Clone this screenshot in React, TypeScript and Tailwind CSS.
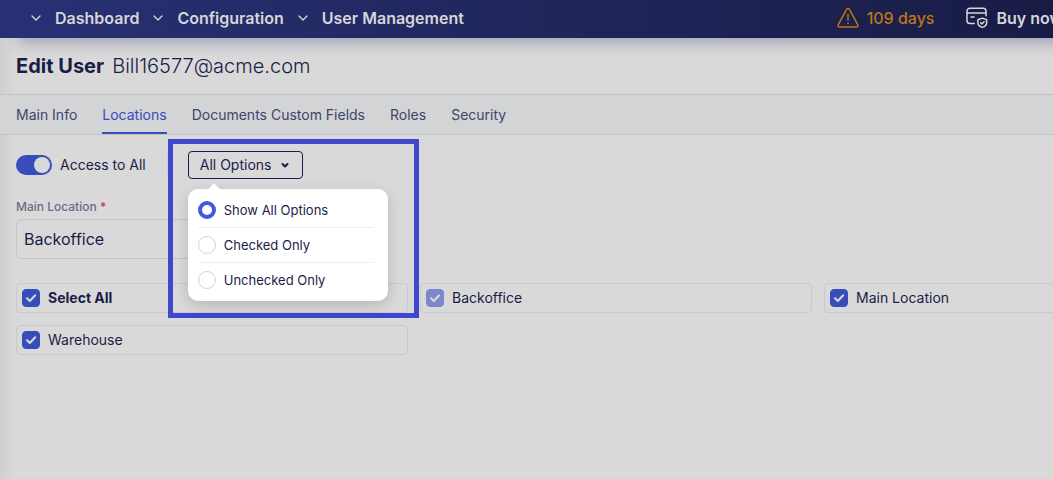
import React, { useState } from 'react';
import { ChevronDown } from 'lucide-react';
import clsx from 'clsx';

const crumbs = ['Dashboard', 'Configuration', 'User Management'];
const tabs = ['Main Info', 'Locations', 'Documents Custom Fields', 'Roles', 'Security'];
const filters = ['Show All Options', 'Checked Only', 'Unchecked Only'];

const WarningIcon = () => (
    <svg className="h-[22px] w-[22px] shrink-0" viewBox="0 0 22 22" fill="none" stroke="currentColor" strokeWidth="1.5" strokeLinecap="round" strokeLinejoin="round">
        <path d="M9.7 2.2 1.3 17.7c-.6 1.2 0 2.3 1.4 2.3h16.6c1.4 0 2-1.1 1.4-2.3L12.3 2.2c-.6-1.1-2-1.1-2.6 0Z" />
        <path d="M11 7.3v6M11 16v.6" />
    </svg>
);

const CardIcon = () => (
    <svg className="h-[22px] w-[22px] shrink-0" viewBox="0 0 22 22" fill="none" stroke="currentColor" strokeWidth="1.5" strokeLinecap="round" strokeLinejoin="round">
        <path d="M8.2 16.6H4c-1.7 0-3-1.1-3-2.8V4.2C1 2.5 2.3 1.3 4 1.3h13c1.7 0 3 1.2 3 2.9v4.6" />
        <path d="M1 6h19M5 10h3" />
        <path d="m16.3 11.1 4.4 1.7v3c0 2.2-1.9 3.8-4.4 4.6-2.5-.8-4.4-2.4-4.4-4.6v-3Z" />
        <path d="m14.6 15.7 1.3 1.2 2.2-2.2" />
    </svg>
);

type LocationCardProps = {
    label: string;
    bold?: boolean;
    disabled?: boolean;
};

const LocationCard = ({ label, bold, disabled }: LocationCardProps) => (
    <label className="flex h-[30px] items-center gap-2 rounded border border-[#c9cacf] px-[5px] text-sm">
        <span className="grid shrink-0">
            <input
                type="checkbox"
                defaultChecked
                disabled={disabled}
                className={clsx(
                    'peer col-start-1 row-start-1 h-[18px] w-[18px] appearance-none rounded border border-[#b9bac4]',
                    disabled ? 'checked:border-[#7c88cb] checked:bg-[#7c88cb]' : 'checked:border-[#364dbb] checked:bg-[#364dbb]'
                )}
            />
            <svg className="pointer-events-none invisible col-start-1 row-start-1 h-[18px] w-[18px] peer-checked:visible" viewBox="0 0 18 18" fill="none" stroke="#d9d9d9" strokeWidth="2" strokeLinecap="round" strokeLinejoin="round">
                <path d="m5 9.3 2.8 2.7L13.2 6.2" />
            </svg>
        </span>
        <span className={clsx(bold && 'font-bold')}>{label}</span>
    </label>
);

const OptionsFilter = () => {
    const [open, setOpen] = useState(true);
    const [selected, setSelected] = useState(filters[0]);

    return (
        <div className="relative">
            <button
                type="button"
                aria-expanded={open}
                onClick={() => setOpen(!open)}
                className="flex h-7 w-[115px] items-center justify-between rounded border border-[#1a1d47] pr-3 pl-[11px] text-sm"
            >
                All Options
                <svg className="h-[10px] w-[10px]" viewBox="0 0 10 10" fill="none" stroke="currentColor" strokeWidth="2" strokeLinecap="round" strokeLinejoin="round">
                    <path d="m2.5 4 2.5 2.5L7.5 4" />
                </svg>
            </button>

            {/* Highlight frame */}
            <div className="pointer-events-none absolute -top-3 -left-5 h-[179px] w-[251px] border-[5px] border-[#3f48cc]" />

            {open && (
                <div className="absolute top-[38px] left-0 w-[200px] rounded-[10px] bg-white py-1 pr-[14px] pl-[10px] shadow-[0_4px_14px_rgba(0,0,0,0.16)]">
                    <div className="absolute -top-1 left-[22px] h-2 w-2 rotate-45 bg-white" />
                    {filters.map((name, i) => (
                        <label
                            key={name}
                            className={clsx('flex items-center gap-2 text-[13px] leading-5', i > 0 ? 'h-[35px] border-t border-[#eeeef1]' : 'h-[34px]')}
                        >
                            <input
                                type="radio"
                                name="filter"
                                checked={selected === name}
                                onChange={() => setSelected(name)}
                                className="h-[18px] w-[18px] shrink-0 appearance-none rounded-full border border-[#d3d3dc] checked:border-4 checked:border-[#405adb]"
                            />
                            {name}
                        </label>
                    ))}
                </div>
            )}
        </div>
    );
};

export default function App() {
    const [access, setAccess] = useState(true);

    return (
        <div className="min-h-screen overflow-x-hidden bg-[#d9d9d9] bg-[linear-gradient(to_right,#cfcfcf,#d9d9d9_16px)] font-['Inter',sans-serif] text-[#1a1d47]">
            <header className="flex h-[38px] items-center bg-linear-to-r from-[#283175] to-[#181c45] pb-0.5 pl-7 text-base font-semibold text-[#d6d6d9] shadow-[18px_5px_14px_rgba(40,45,110,0.3)]">
                <nav className="flex items-center gap-[11px]">
                    {crumbs.map((crumb) => (
                        <React.Fragment key={crumb}>
                            <ChevronDown size={16} strokeWidth={2} />
                            <a href="#" className="whitespace-nowrap">{crumb}</a>
                        </React.Fragment>
                    ))}
                </nav>
                <div className="-mr-2.5 ml-auto flex items-center gap-8 whitespace-nowrap">
                    <span className="flex items-center gap-2 font-medium text-[#bd7616]">
                        <WarningIcon />
                        109 days
                    </span>
                    <a href="#" className="flex items-center gap-2">
                        <CardIcon />
                        Buy now
                    </a>
                </div>
            </header>

            <h1 className="flex h-14 items-center gap-2 px-4 text-xl">
                <span className="font-bold">Edit User</span>
                <span className="font-light">Bill16577@acme.com</span>
            </h1>

            <nav className="flex h-[41px] gap-[25px] border-y border-[#c3c3c5] bg-[#d2d4d6] px-4 text-sm text-[#41446a]">
                {tabs.map((tab) => (
                    <a
                        key={tab}
                        href="#"
                        className={clsx(
                            'flex items-center border-y-2 border-transparent whitespace-nowrap',
                            tab === 'Locations' && 'border-b-[#364dbb] text-[#364dbb]'
                        )}
                    >
                        {tab}
                    </a>
                ))}
            </nav>

            <main className="flex flex-col px-4 pt-4">
                <div className="relative z-10 flex items-center gap-[21px]">
                    <label className="flex items-center gap-2 text-sm">
                        <span className="grid items-center">
                            <input
                                type="checkbox"
                                role="switch"
                                checked={access}
                                onChange={() => setAccess(!access)}
                                className="peer col-start-1 row-start-1 h-5 w-9 appearance-none rounded-full bg-[#a9abb8] checked:bg-[#364dbb]"
                            />
                            <span className="pointer-events-none col-start-1 row-start-1 ml-[2px] h-4 w-4 rounded-full bg-[#d9d9d9] peer-checked:ml-[18px]" />
                        </span>
                        Access to All
                    </label>
                    <div className="flex items-center gap-5">
                        <div className="h-7 w-px bg-[#cfcfd6]" />
                        <OptionsFilter />
                    </div>
                </div>

                <div className="mt-5 flex flex-col">
                    <label htmlFor="main-location" className="text-xs leading-4 font-medium text-[#6b6d84]">
                        Main Location <span className="text-[#d0334f]">*</span>
                    </label>
                    <select
                        id="main-location"
                        className="mt-1 h-10 w-[300px] appearance-none rounded-md border border-[#c3c3c8] px-[7px] text-base"
                    >
                        <option>Backoffice</option>
                        <option>Main Location</option>
                        <option>Warehouse</option>
                    </select>
                </div>

                <div className="mt-6 grid grid-cols-[repeat(3,minmax(392px,1fr))] gap-3">
                    <LocationCard label="Select All" bold />
                    <LocationCard label="Backoffice" disabled />
                    <LocationCard label="Main Location" />
                    <LocationCard label="Warehouse" />
                </div>
            </main>
        </div>
    );
}
